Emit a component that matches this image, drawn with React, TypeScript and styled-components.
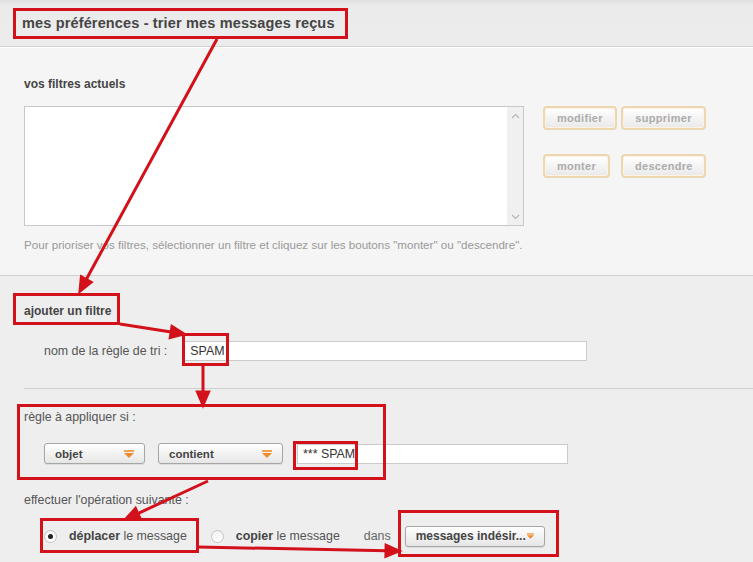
import styled, { createGlobalStyle } from "styled-components";

const GlobalStyle = createGlobalStyle`
  * { box-sizing: border-box; }
  body {
    margin: 0;
    background: #eeeeee;
    font-family: "Liberation Sans", Arial, sans-serif;
  }
`;

type Box = { x: number; y: number; w: number; h: number };
type Line = { x1: number; y1: number; x2: number; y2: number };

const boxes: Box[] = [
  { x: 14.5, y: 9.5, w: 332, h: 28 },
  { x: 14.5, y: 294.5, w: 104, h: 29 },
  { x: 183.5, y: 334.5, w: 44, h: 30 },
  { x: 18.5, y: 405.5, w: 366, h: 73 },
  { x: 294.5, y: 442.5, w: 62, h: 26 },
  { x: 41.5, y: 519.5, w: 156, h: 32 },
  { x: 399.5, y: 511.5, w: 158, h: 44 },
];

const arrows: Line[] = [
  { x1: 217, y1: 39, x2: 80, y2: 291 },
  { x1: 120, y1: 324, x2: 184, y2: 334 },
  { x1: 203, y1: 366, x2: 203, y2: 405 },
  { x1: 208, y1: 481, x2: 126, y2: 519 },
  { x1: 198, y1: 547, x2: 399, y2: 551 },
];

function Arrow({ x1, y1, x2, y2 }: Line) {
  const a = Math.atan2(y2 - y1, x2 - x1);
  const len = 13;
  const half = 5.5;
  const bx = x2 - len * Math.cos(a);
  const by = y2 - len * Math.sin(a);
  const px = half * Math.sin(a);
  const py = half * Math.cos(a);
  return (
    <g>
      <line x1={x1} y1={y1} x2={bx} y2={by} />
      <polygon
        points={`${x2},${y2} ${bx + px},${by - py} ${bx - px},${by + py}`}
      />
    </g>
  );
}

function Annotations() {
  return (
    <Overlay viewBox="0 0 753 562">
      <g fill="none" stroke="#d2111b" strokeWidth={3}>
        {boxes.map((b, i) => (
          <rect key={i} x={b.x} y={b.y} width={b.w} height={b.h} />
        ))}
      </g>
      <g fill="#d2111b" stroke="#d2111b" strokeWidth={3}>
        {arrows.map((l, i) => (
          <Arrow key={i} {...l} />
        ))}
      </g>
    </Overlay>
  );
}

function OrangeArrow() {
  return (
    <svg width="10" height="8" viewBox="0 0 10 8">
      <rect x="0" y="0" width="10" height="2" fill="#f0a050" />
      <polygon points="0,3 10,3 5,8" fill="#ee8a2c" />
    </svg>
  );
}

function Chevron({ up }: { up?: boolean }) {
  return (
    <svg width="9" height="6" viewBox="0 0 9 6">
      <polyline
        points={up ? "1,5 4.5,1.5 8,5" : "1,1 4.5,4.5 8,1"}
        fill="none"
        stroke="#b5b5b5"
        strokeWidth="1.2"
      />
    </svg>
  );
}

export default function App() {
  return (
    <>
      <GlobalStyle />
      <Page>
        <Header>
          <Title>mes préférences - trier mes messages reçus</Title>
        </Header>

        <Current>
          <SectionTitle>vos filtres actuels</SectionTitle>
          <CurrentRow>
            <FilterList>
              <ScrollBar>
                <Chevron up />
                <Chevron />
              </ScrollBar>
            </FilterList>
            <ActionGrid>
              <ActionButton>modifier</ActionButton>
              <ActionButton>supprimer</ActionButton>
              <ActionButton>monter</ActionButton>
              <ActionButton>descendre</ActionButton>
            </ActionGrid>
          </CurrentRow>
          <Help>
            Pour prioriser vos filtres, sélectionner un filtre et cliquez sur
            les boutons "monter" ou "descendre".
          </Help>
        </Current>

        <AddFilter>
          <SectionTitle>ajouter un filtre</SectionTitle>
          <NameRow>
            <Label>nom de la règle de tri :</Label>
            <TextInput $width={403}>SPAM</TextInput>
          </NameRow>
          <Separator />
          <Label>règle à appliquer si :</Label>
          <RuleRow>
            <Select $width={101}>
              <span>objet</span>
              <OrangeArrow />
            </Select>
            <Select $width={125}>
              <span>contient</span>
              <OrangeArrow />
            </Select>
            <TextInput $width={271}>*** SPAM</TextInput>
          </RuleRow>
          <Label>effectuer l'opération suivante :</Label>
          <ActionRow>
            <Choice>
              <Radio $checked />
              <span>
                <b>déplacer</b> le message
              </span>
            </Choice>
            <Choice>
              <Radio />
              <span>
                <b>copier</b> le message
              </span>
            </Choice>
            <Dans>dans</Dans>
            <Select $width={140} $tight>
              <span>messages indésir...</span>
              <OrangeArrow />
            </Select>
          </ActionRow>
        </AddFilter>

        <Annotations />
      </Page>
    </>
  );
}

const Page = styled.div`
  position: relative;
  width: 753px;
  height: 562px;
  overflow: hidden;
  background: #eeeeee;
  color: #555;
`;

const Overlay = styled.svg`
  position: absolute;
  inset: 0;
  width: 753px;
  height: 562px;
  pointer-events: none;
`;

const Header = styled.header`
  display: flex;
  align-items: center;
  height: 47px;
  padding: 0 0 1px 22px;
  background: linear-gradient(#dedede 0, #ebebeb 5px, #ececec 100%);
  border-bottom: 1px solid #d3d3d3;
`;

const Title = styled.h1`
  margin: 0;
  font-size: 14.5px;
  font-weight: bold;
  color: #454545;
  letter-spacing: 0.15px;
`;

const Current = styled.section`
  height: 229px;
  padding: 29px 0 0 24px;
  background: #f5f5f5;
  border-top: 1px solid #ffffff;
  border-bottom: 1px solid #cfcfcf;
`;

const SectionTitle = styled.h2`
  margin: 0 0 15px;
  font-size: 12px;
  line-height: 14px;
  font-weight: bold;
  color: #444;
`;

const CurrentRow = styled.div`
  display: flex;
  align-items: flex-start;
  gap: 19px;
`;

const FilterList = styled.div`
  display: flex;
  justify-content: flex-end;
  width: 500px;
  height: 120px;
  background: #fff;
  border: 1px solid #c8c8c8;
`;

const ScrollBar = styled.div`
  display: flex;
  flex-direction: column;
  align-items: center;
  justify-content: space-between;
  width: 16px;
  padding: 6px 0 5px;
  background: #f0f0f0;
`;

const ActionGrid = styled.div`
  display: grid;
  grid-template-columns: 73px 85px;
  gap: 24px 5px;
  justify-items: start;
`;

const ActionButton = styled.button`
  height: 24px;
  padding: 0 12px;
  border: 2px solid #edd7b1;
  border-radius: 4px;
  background: linear-gradient(#ffffff, #e9e9e9);
  box-shadow: inset 0 0 0 1px #faf3e6;
  font-family: inherit;
  font-size: 11px;
  font-weight: bold;
  color: #acacac;
  letter-spacing: 0.3px;

  &:last-child,
  &:nth-child(2) {
    width: 85px;
  }
`;

const Help = styled.p`
  margin: 12px 0 0;
  font-size: 11.6px;
  line-height: 13px;
  color: #999;
`;

const AddFilter = styled.section`
  padding: 28px 0 0 24px;
  background: #eeeeee;

  > h2 {
    margin-bottom: 23px;
  }
`;

const Label = styled.div`
  font-size: 12.4px;
  line-height: 14px;
  color: #555;
`;

const NameRow = styled.div`
  display: flex;
  align-items: center;
  gap: 17px;
  padding-left: 20px;
  margin-bottom: 27px;
`;

const TextInput = styled.div<{ $width: number }>`
  display: flex;
  align-items: center;
  width: ${(p) => p.$width}px;
  height: 20px;
  padding: 0 5px;
  background: #fff;
  border: 1px solid #cbcbcb;
  font-size: 12.4px;
  color: #333;
`;

const Separator = styled.hr`
  margin: 0 0 21px;
  border: 0;
  border-top: 1px solid #cfcfcf;
`;

const RuleRow = styled.div`
  display: flex;
  align-items: center;
  gap: 13px;
  padding-left: 20px;
  margin: 19px 0 29px;

  > div:last-child {
    margin-left: 1px;
  }
`;

const Select = styled.div<{ $width: number; $tight?: boolean }>`
  display: flex;
  align-items: center;
  justify-content: ${(p) => (p.$tight ? "flex-start" : "space-between")};
  gap: 1px;
  width: ${(p) => p.$width}px;
  height: 21px;
  padding: 0 10px;
  border: 1px solid #a6a6a6;
  border-radius: 3px;
  background: linear-gradient(#ffffff, #e6e6e6);
  box-shadow: 0 1px 1px rgba(0, 0, 0, 0.08);
  font-size: ${(p) => (p.$tight ? 12 : 11.5)}px;
  font-weight: bold;
  color: #444;
  white-space: nowrap;
`;

const ActionRow = styled.div`
  display: flex;
  align-items: center;
  height: 20px;
  margin-top: 19px;
  padding-left: 20px;
`;

const Choice = styled.label`
  display: flex;
  align-items: center;
  gap: 12px;
  margin-right: 24px;
  font-size: 12.4px;
  color: #555;

  b {
    color: #444;
  }
`;

const Radio = styled.span<{ $checked?: boolean }>`
  display: grid;
  place-items: center;
  width: 13px;
  height: 13px;
  border-radius: 50%;
  border: 1px solid #c4c4c4;
  background: linear-gradient(#f2f2f2, #ffffff);

  &::after {
    content: "";
    width: 5px;
    height: 5px;
    border-radius: 50%;
    background: ${(p) => (p.$checked ? "#222" : "transparent")};
  }
`;

const Dans = styled.span`
  margin: 0 14px 0 0;
  font-size: 12.4px;
  color: #666;
`;
